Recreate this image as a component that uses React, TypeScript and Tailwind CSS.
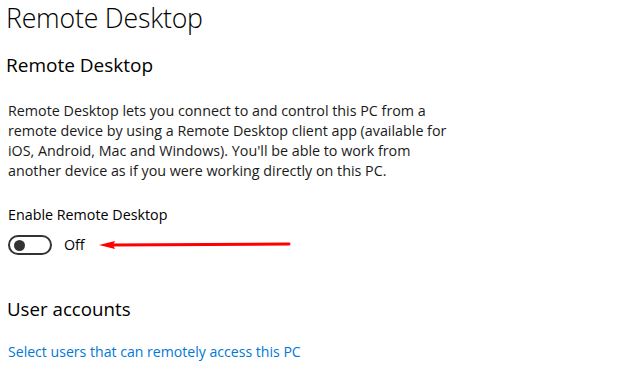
export default function App() {
  return (
    <div className="w-[641px] h-[370px] bg-white overflow-hidden pl-[6px] text-black font-['Open_Sans',sans-serif]">
      <h1 className="text-[26.7px] leading-[38px] font-light tracking-[-0.2px] mt-[-1px]">Remote Desktop</h1>
      <h2 className="text-[19px] leading-[28px] mt-[14px]">Remote Desktop</h2>

      <p className="text-[14.3px] leading-[20px] mt-[22px] pl-[2px] text-[#1a1a1a] whitespace-nowrap">
        Remote Desktop lets you connect to and control this PC from a<br />
        remote device by using a Remote Desktop client app (available for<br />
        iOS, Android, Mac and Windows). You'll be able to work from<br />
        another device as if you were working directly on this PC.
      </p>

      <div className="mt-[24px] pl-[2px]">
        <div className="text-[14.3px] leading-[20px]">Enable Remote Desktop</div>
        <div className="flex items-center mt-[10px] h-[20px]">
          <div className="w-[44px] h-[20px] rounded-full border-2 border-[#333] flex items-center pl-[4px]">
            <div className="w-[11px] h-[11px] rounded-full bg-[#333]" />
          </div>
          <span className="text-[14.3px] leading-[20px] ml-[12px]">Off</span>
          <svg width="192" height="10" viewBox="0 0 192 10" className="ml-[14px]">
            <path d="M0 5 L16 1 L14 5 L16 9 Z" fill="#ff0000" />
            <path d="M12 5 L190 4" stroke="#ff0000" strokeWidth="3" strokeLinecap="round" />
          </svg>
        </div>
      </div>

      <h2 className="text-[18.7px] leading-[28px] mt-[40px] pl-px">User accounts</h2>
      <a className="block text-[14.1px] leading-[20px] mt-[19px] pl-[2px] text-[#0078d7]">
        Select users that can remotely access this PC
      </a>
    </div>
  );
}
